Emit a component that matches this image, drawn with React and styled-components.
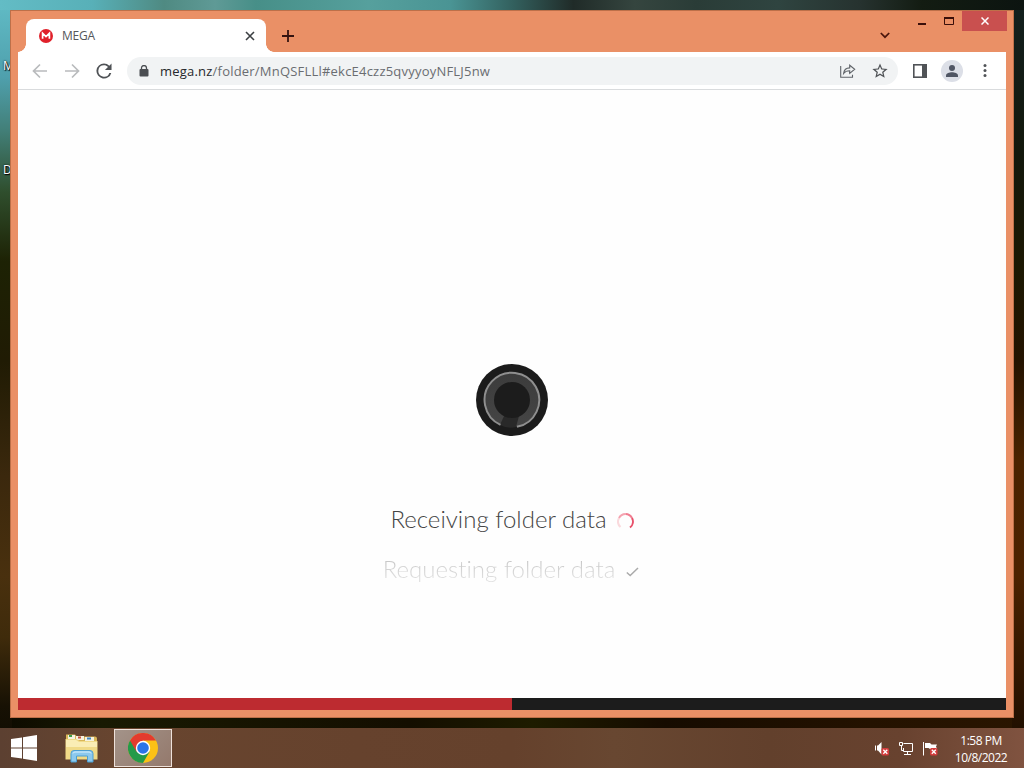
import styled, { createGlobalStyle } from "styled-components";

const uiFont = `"Open Sans", "Noto Sans", sans-serif`;

const App = () => {
  return (
    <>
      <GlobalStyle />
      <Desktop>
        <DesktopLabel $top={59}>M</DesktopLabel>
        <DesktopLabel $top={163}>D</DesktopLabel>
        <BrowserWindow>
          <TitleBar>
            <Tab>
              <MegaIcon />
              <TabTitle>MEGA</TabTitle>
              <TabClose />
            </Tab>
            <NewTab />
            <TabSearch />
            <WindowControls />
          </TitleBar>
          <Toolbar />
          <Page>
            <Loader />
            <Status>
              <StatusLine>
                Receiving folder data <Spinner />
              </StatusLine>
              <StatusLine $faded>
                Requesting folder data <Check />
              </StatusLine>
            </Status>
            <ProgressBar>
              <Progress />
            </ProgressBar>
          </Page>
        </BrowserWindow>
        <Taskbar />
      </Desktop>
    </>
  );
};

const MegaIcon = () => (
  <svg width="14" height="14" viewBox="0 0 14 14">
    <circle cx="7" cy="7" r="7" fill="#e0202a" />
    <path
      d="M3.6 9.8V4.3L7 7.6l3.4-3.3v5.5"
      fill="none"
      stroke="#fff"
      strokeWidth="1.7"
    />
  </svg>
);

const TabClose = () => (
  <svg width="10" height="10" viewBox="0 0 10 10">
    <path d="M1 1l8 8M9 1L1 9" stroke="#3c4043" strokeWidth="1.6" />
  </svg>
);

const NewTab = () => (
  <NewTabButton aria-label="New tab">
    <svg width="12" height="12" viewBox="0 0 12 12">
      <path d="M6 0v12M0 6h12" stroke="#351310" strokeWidth="1.8" />
    </svg>
  </NewTabButton>
);

const TabSearch = () => (
  <TabSearchButton aria-label="Search tabs">
    <svg width="10" height="7" viewBox="0 0 10 7">
      <path
        d="M0.8 1L5 5.2 9.2 1"
        fill="none"
        stroke="#4a160c"
        strokeWidth="1.7"
      />
    </svg>
  </TabSearchButton>
);

const WindowControls = () => (
  <Controls>
    <Control $width={27} aria-label="Minimize">
      <svg width="8" height="12" viewBox="0 0 8 12">
        <path d="M0 9h8" stroke="#3a0f0a" strokeWidth="2" />
      </svg>
    </Control>
    <Control $width={27} aria-label="Maximize">
      <svg width="10" height="8" viewBox="0 0 10 8">
        <path d="M0.5 1v6.5h9V1" fill="none" stroke="#3a0f0a" />
        <path d="M0 1h10" stroke="#3a0f0a" strokeWidth="2" />
      </svg>
    </Control>
    <Control $width={45} $close aria-label="Close">
      <svg width="8" height="8" viewBox="0 0 8 8">
        <path d="M0.5 0.5l7 7M7.5 0.5l-7 7" stroke="#fff" strokeWidth="1.5" />
      </svg>
    </Control>
  </Controls>
);

const Toolbar = () => (
  <ToolbarRow>
    <Navigation>
      <svg width="16" height="16" viewBox="0 0 16 16">
        <path
          d="M15 8H2M8 1.5L1.5 8 8 14.5"
          fill="none"
          stroke="#b9bbbd"
          strokeWidth="1.7"
        />
      </svg>
      <svg width="16" height="16" viewBox="0 0 16 16">
        <path
          d="M1 8h13M8 1.5L14.5 8 8 14.5"
          fill="none"
          stroke="#b9bbbd"
          strokeWidth="1.7"
        />
      </svg>
      <svg width="16" height="16" viewBox="3.5 3.5 17 17">
        <path
          fill="#4f5256"
          d="M17.65 6.35A7.96 7.96 0 0 0 12 4a8 8 0 1 0 7.73 10h-2.08A6 6 0 1 1 12 6c1.66 0 3.14.69 4.22 1.78L13 11h7V4l-2.35 2.35z"
        />
      </svg>
    </Navigation>
    <AddressBar>
      <svg width="10" height="12" viewBox="0 0 10 12">
        <rect x="0.5" y="4" width="9" height="7.5" rx="1" fill="#4b4e52" />
        <path
          d="M2.5 4.5V3a2.5 2.5 0 0 1 5 0v1.5"
          fill="none"
          stroke="#4b4e52"
          strokeWidth="1.3"
        />
      </svg>
      <Url>
        <b>mega.nz</b>/folder/MnQSFLLl#ekcE4czz5qvyyoyNFLJ5nw
      </Url>
      <svg width="16" height="14" viewBox="0 0 16 14">
        <path
          d="M1.2 2.5H0.7v10.8h11.8v-2.5M3.6 9.5C4 6 6 4 9.7 3.9V1.2l5 4.1-5 4.1V6.8C7 6.8 5 7.6 3.6 9.5z"
          fill="none"
          stroke="#5f6368"
          strokeWidth="1.1"
        />
      </svg>
      <svg width="16" height="16" viewBox="1.5 1.5 21 21">
        <path
          fill="#4f5256"
          d="M22 9.24l-7.19-.62L12 2 9.19 8.63 2 9.24l5.46 4.73L5.82 21 12 17.27 18.18 21l-1.63-7.03L22 9.24zM12 15.4l-3.76 2.27 1-4.28-3.32-2.88 4.38-.38L12 6.1l1.71 4.04 4.38.38-3.32 2.88 1 4.28L12 15.4z"
        />
      </svg>
    </AddressBar>
    <SidePanel>
      <svg width="14" height="14" viewBox="0 0 14 14">
        <rect
          x="0.8"
          y="0.8"
          width="12.4"
          height="12.4"
          fill="none"
          stroke="#505357"
          strokeWidth="1.6"
        />
        <path d="M9 1h4.5v12H9z" fill="#505357" />
      </svg>
    </SidePanel>
    <Avatar>
      <svg width="12" height="12" viewBox="0 0 12 12">
        <circle cx="6" cy="3" r="3" fill="#505664" />
        <path
          d="M0 12V10.5C0 8.5 3.5 7.3 6 7.3s6 1.2 6 3.2V12z"
          fill="#505664"
        />
      </svg>
    </Avatar>
    <svg width="4" height="13" viewBox="0 0 4 13">
      <circle cx="2" cy="1.6" r="1.5" fill="#505357" />
      <circle cx="2" cy="6.5" r="1.5" fill="#505357" />
      <circle cx="2" cy="11.4" r="1.5" fill="#505357" />
    </svg>
  </ToolbarRow>
);

const Loader = () => (
  <svg width="72" height="72" viewBox="0 0 72 72">
    <defs>
      <linearGradient id="disc" x1="0" y1="0" x2="0" y2="1">
        <stop offset="0" stopColor="#3c3c3c" />
        <stop offset="1" stopColor="#454545" />
      </linearGradient>
    </defs>
    <circle cx="36" cy="36" r="36" fill="#1b1b1b" />
    <circle cx="36" cy="36" r="27" fill="url(#disc)" />
    <path d="M28 52L24 61Q32 65 40 63L43 52z" fill="#292929" />
    <path
      d="M24.5 60.8A27.3 27.3 0 1 1 41 62.8"
      fill="none"
      stroke="#8f8f8f"
      strokeWidth="2"
    />
    <circle cx="36" cy="36" r="18" fill="#1c1c1c" />
  </svg>
);

const Check = () => (
  <StatusIcon $offset={8} $gap={11}>
    <svg width="13" height="10" viewBox="0 0 13 10">
      <path
        d="M0.8 5.5l3.4 3L12 1"
        fill="none"
        stroke="#aaa"
        strokeWidth="1.5"
      />
    </svg>
  </StatusIcon>
);

const Spinner = () => (
  <StatusIcon $offset={6} $gap={10}>
    <svg width="17" height="17" viewBox="0 0 17 17" fill="none" strokeWidth="2">
      <path d="M3.5 14A7.5 7.5 0 0 1 2 5" stroke="#fadadd" />
      <path d="M2 5A7.5 7.5 0 0 1 8.500 1" stroke="#f5a3b0" />
      <path d="M8.5 1A7.5 7.5 0 0 1 15 5" stroke="#f07c90" />
      <path d="M15 5A7.5 7.5 0 0 1 13 14.5" stroke="#e8506a" />
    </svg>
  </StatusIcon>
);

const Taskbar = () => (
  <TaskbarRow>
    <TaskButton $width={48}>
      <svg width="26" height="26" viewBox="0 0 26 26" fill="#fff">
        <path d="M0 4l11-1.6V12.4H0zM12 2.2L26 0v12.4H12zM0 13.4h11v10L0 21.9zM12 13.4h14V26l-14-2.3z" />
      </svg>
    </TaskButton>
    <TaskButton $width={66}>
      <FolderIcon />
    </TaskButton>
    <TaskButton $width={58} $active>
      <ChromeIcon />
    </TaskButton>
    <Tray>
      <VolumeIcon />
      <NetworkIcon />
      <FlagIcon />
      <Clock>
        <span>1:58 PM</span>
        <span>10/8/2022</span>
      </Clock>
    </Tray>
  </TaskbarRow>
);

const FolderIcon = () => (
  <svg width="33" height="30" viewBox="0 0 33 30">
    <path d="M1 1.500h9l2 2h18a2 2 0 0 1 2 2V25H1z" fill="#d9b658" />
    <path d="M3 2h7v4H3zM11 3h8v4h-8zM20 4h9v4h-9z" fill="#f6f2de" />
    <path d="M4 2h3v2H4z" fill="#3c9c4a" />
    <path d="M13 3.5h3v2h-3z" fill="#c5523c" />
    <path d="M22 4.5h4v2h-4z" fill="#3f86c2" />
    <path d="M0.5 6h11l3 2h18v18.5h-32z" fill="#f0da88" />
    <path d="M1 7h10l3 2h18v5H1z" fill="#faedb5" />
    <path
      d="M6 29V20.5a3 3 0 0 1 3-3h16a3 3 0 0 1 3 3V29h-5.5v-6h-11v6z"
      fill="#8cc9ee"
      stroke="#4d9fd2"
    />
    <path
      d="M8 20.5a2 2 0 0 1 2-1.5h14a2 2 0 0 1 2 1.5"
      fill="none"
      stroke="#d8f1ff"
    />
  </svg>
);

const ChromeIcon = () => (
  <svg width="30" height="30" viewBox="0 0 30 30">
    <circle cx="15" cy="15" r="15" fill="#fbc116" />
    <path d="M2 7.5A15 15 0 0 0 15 30l6.5-11.3L15 15z" fill="#249a49" />
    <path d="M2 7.5A15 15 0 0 1 28 7.5H15V15L8.5 18.7z" fill="#e33b2e" />
    <circle cx="15" cy="15" r="7.2" fill="#fff" />
    <circle cx="15" cy="15" r="5.8" fill="#2a74e8" />
  </svg>
);

const ErrorBadge = ({ x, y }) => (
  <g transform={`translate(${x} ${y})`}>
    <rect width="7.5" height="7.5" rx="1.5" fill="#d33c3c" />
    <path
      d="M1.8 1.8l4 4M5.8 1.8l-4 4"
      stroke="#fff"
      strokeWidth="1.3"
    />
  </g>
);

const VolumeIcon = () => (
  <svg width="16" height="15" viewBox="0 0 16 15">
    <path d="M1.5 4.5v5" stroke="#fff" />
    <path d="M3 4.5h1L7.5 1v12.5L4 9.5H3z" fill="#fff" />
    <ErrorBadge x={7.5} y={7} />
  </svg>
);

const NetworkIcon = () => (
  <svg width="16" height="15" viewBox="0 0 16 15" fill="none" stroke="#fff">
    <path d="M5.5 2.5h9v8h-9V7M9.5 10.5v3M6 13.5h7" />
    <path d="M1.5 1.5h3v3h-3zM3.5 4.5v5H5" />
  </svg>
);

const FlagIcon = () => (
  <svg width="16" height="15" viewBox="0 0 16 15">
    <path d="M1.5 1v13.5" stroke="#fff" />
    <path d="M3 2h5l1.5 1.5H15l-1 2 1 2.5H8L6.5 7H3z" fill="#fff" />
    <ErrorBadge x={8} y={7} />
  </svg>
);

const GlobalStyle = createGlobalStyle`
  * {
    box-sizing: border-box;
  }
  body {
    margin: 0;
    overflow: hidden;
  }
  button {
    border: 0;
    padding: 0;
    background: none;
  }
  svg {
    display: block;
    flex-shrink: 0;
  }
`;

const Desktop = styled.div`
  position: relative;
  width: 1024px;
  height: 768px;
  overflow: hidden;
  display: flex;
  flex-direction: column;
  background:
    linear-gradient(90deg, #63bcc5, #58b0b8 9%, #4f8a82 16%, #5f9a96 21%, #478f88 25%, #56a09d 36%, #4a9494 44%, #33615f 50%, #202b28 56%, #35453f 62%, #2a3c37 68%, #2f4440 76%, #26322f 84%, #131c12 90%, #0c1410)
      top left / 100% 10px no-repeat,
    linear-gradient(#12201f, #12180c 20%, #1c1802 35%, #241300 47%, #4b2300 60%, #4c2200 75%, #2a1300 91%, #160b00)
      right / 12px 100% no-repeat,
    linear-gradient(#61bcc6, #4fa0ad 10%, #427f78 17%, #2f4e2d 25%, #1d2204 34%, #201b04 47%, #3b280d 62%, #49300e 75%, #3f2b0b 83%, #171104 92%, #0c0a00)
      left / 12px 100% no-repeat,
    linear-gradient(90deg, #0c0a00, #191a02 10%, #140e00 40%, #1e1c00 52%, #160b00 65%, #241200 85%, #2a1500)
      bottom / 100% 60px no-repeat;
`;

const DesktopLabel = styled.span`
  position: absolute;
  top: ${(props) => props.$top}px;
  left: 3px;
  font-family: ${uiFont};
  font-size: 12px;
  line-height: 14px;
  color: #fff;
  text-shadow: 1px 1px 1px #000, 0 0 2px #000;
`;

const BrowserWindow = styled.div`
  position: relative;
  height: 708px;
  margin: 10px;
  padding: 0 7px 7px;
  display: flex;
  flex-direction: column;
  flex-shrink: 0;
  background: #ea9066;
  border: 1px solid #bd7049;
`;

const TitleBar = styled.div`
  height: 41px;
  display: flex;
  align-items: flex-end;
  padding-left: 8px;
`;

const Tab = styled.div`
  position: relative;
  width: 240px;
  height: 33px;
  padding: 0 11px 0 13px;
  display: flex;
  align-items: center;
  background: #fff;
  border-radius: 8px 8px 0 0;
  &::before,
  &::after {
    content: "";
    position: absolute;
    bottom: 0;
    width: 8px;
    height: 8px;
  }
  &::before {
    left: -8px;
    background: radial-gradient(circle at 0 0, transparent 7.5px, #fff 8px);
  }
  &::after {
    right: -8px;
    background: radial-gradient(circle at 100% 0, transparent 7.5px, #fff 8px);
  }
`;

const TabTitle = styled.span`
  flex: 1;
  margin-left: 9px;
  font-family: ${uiFont};
  font-size: 12px;
  letter-spacing: -0.2px;
  color: #54575b;
`;

const NewTabButton = styled.button`
  margin: 0 0 10px 16px;
`;

const TabSearchButton = styled.button`
  margin: 0 18px 13px auto;
`;

const Controls = styled.div`
  align-self: flex-start;
  display: flex;
  height: 20px;
  margin-right: -1px;
`;

const Control = styled.button`
  width: ${(props) => props.$width}px;
  height: 20px;
  display: flex;
  align-items: center;
  justify-content: center;
  background: ${(props) => (props.$close ? "#c9504f" : "none")};
`;

const ToolbarRow = styled.div`
  height: 38px;
  display: flex;
  align-items: center;
  flex-shrink: 0;
  padding: 0 19px 0 14px;
  background: #fff;
  border-bottom: 1px solid #d9dbdd;
`;

const Navigation = styled.div`
  display: flex;
  gap: 16px;
`;

const AddressBar = styled.div`
  width: 771px;
  height: 28px;
  margin-left: 15px;
  padding: 0 10px 0 12px;
  display: flex;
  align-items: center;
  gap: 16px;
  background: #f1f3f4;
  border-radius: 14px;
`;

const Url = styled.span`
  flex: 1;
  margin-left: -5px;
  font-family: ${uiFont};
  font-size: 13px;
  letter-spacing: 0.21px;
  color: #6a6d71;
  white-space: nowrap;
  b {
    font-weight: 400;
    color: #26282b;
  }
`;

const SidePanel = styled.div`
  margin-left: 15px;
`;

const Avatar = styled.div`
  width: 22px;
  height: 22px;
  margin: 0 20px 0 14px;
  display: flex;
  align-items: center;
  justify-content: center;
  background: #dcdfe7;
  border-radius: 50%;
`;

const Page = styled.main`
  flex: 1;
  display: flex;
  flex-direction: column;
  align-items: center;
  padding-top: 274px;
  background: #fefefe;
`;

const Status = styled.div`
  margin-top: 57px;
  display: flex;
  flex-direction: column;
  align-items: center;
`;

const StatusLine = styled.div`
  height: 50px;
  display: flex;
  align-items: center;
  font-family: Lato, sans-serif;
  font-size: 24px;
  font-weight: 300;
  letter-spacing: 0.02px;
  font-variant-ligatures: common-ligatures;
  white-space: nowrap;
  color: #444;
  ${(props) =>
    props.$faded &&
    `
    margin-right: 2px;
    background: linear-gradient(#c4c4c4 30%, #dedede 70%);
    background-clip: text;
    color: transparent;
  `}
`;

const StatusIcon = styled.span`
  margin: ${(props) => props.$offset}px 0 0 ${(props) => props.$gap}px;
`;

const ProgressBar = styled.div`
  width: 100%;
  height: 12px;
  margin-top: auto;
  background: #1c1c1c;
`;

const Progress = styled.div`
  width: 50%;
  height: 100%;
  background: #bd2b30;
`;

const TaskbarRow = styled.div`
  height: 40px;
  flex-shrink: 0;
  display: flex;
  align-items: center;
  background: linear-gradient(90deg, #5c4031, #68452f 12%, #66422d 35%, #65412c 50%, #684731 60%, #62402c 75%, #68422f 88%, #805340);
`;

const TaskButton = styled.div`
  width: ${(props) => props.$width}px;
  height: 38px;
  display: flex;
  align-items: center;
  justify-content: center;
  ${(props) =>
    props.$active &&
    `
    background: linear-gradient(135deg, #a39389, #94796c);
    border: 1px solid #eee1da;
  `}
`;

const Tray = styled.div`
  margin-left: auto;
  padding-right: 16px;
  display: flex;
  align-items: center;
  gap: 8px;
`;

const Clock = styled.div`
  width: 54px;
  margin-left: 8px;
  padding-top: 1px;
  display: flex;
  flex-direction: column;
  align-items: center;
  font-family: ${uiFont};
  font-size: 12px;
  line-height: 17px;
  letter-spacing: -0.5px;
  color: #fff;
  white-space: nowrap;
`;

export default App;
